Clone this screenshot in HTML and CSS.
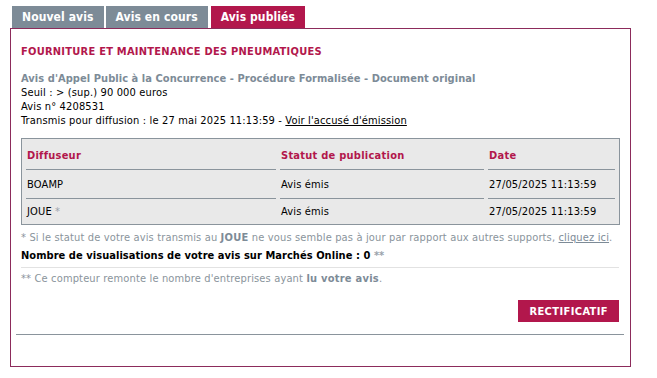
FILE: index.html
```html
<!DOCTYPE html>
<html lang="fr">
  <head>
    <meta charset="UTF-8" />
    <title>Avis publiés</title>
    <link rel="stylesheet" href="styles.css">
  </head>
  <body>
    <div class="tabs">
      <a class="tab">Nouvel avis</a>
      <a class="tab">Avis en cours</a>
      <a class="tab active">Avis publiés</a>
    </div>
    <div class="panel">
      <h1 class="title">FOURNITURE ET MAINTENANCE DES PNEUMATIQUES</h1>
      <div class="info">
        <div class="type">Avis d'Appel Public à la Concurrence - Procédure Formalisée - Document original</div>
        <div>Seuil : &gt; (sup.) 90 000 euros</div>
        <div>Avis n° 4208531</div>
        <div>Transmis pour diffusion : le 27 mai 2025 11:13:59 - <a href="#">Voir l'accusé d'émission</a></div>
      </div>
      <table class="diffusion">
        <thead>
          <tr>
            <th class="col1">Diffuseur</th>
            <th class="col2">Statut de publication</th>
            <th>Date</th>
          </tr>
        </thead>
        <tbody>
          <tr>
            <td>BOAMP</td>
            <td>Avis émis</td>
            <td>27/05/2025 11:13:59</td>
          </tr>
          <tr class="last">
            <td>JOUE <span class="star">*</span></td>
            <td>Avis émis</td>
            <td>27/05/2025 11:13:59</td>
          </tr>
        </tbody>
      </table>
      <p class="note">* Si le statut de votre avis transmis au <b>JOUE</b> ne vous semble pas à jour par rapport aux autres supports, <a href="#">cliquez ici</a>.</p>
      <p class="views">Nombre de visualisations de votre avis sur Marchés Online : 0 <span class="star">**</span></p>
      <p class="note count">** Ce compteur remonte le nombre d'entreprises ayant <b>lu votre avis</b>.</p>
      <div class="actions">
        <button class="btn">RECTIFICATIF</button>
      </div>
      <hr class="sep" />
    </div>
  </body>
</html>
```

FILE: styles.css
```css
body {
  margin: 6px 10px;
  font-family: "DejaVu Sans", Verdana, sans-serif;
  font-size: 11px;
  font-stretch: condensed;
  letter-spacing: 0.15px;
  color: #000;
  background: #fff;
}
b,
th,
.title {
  letter-spacing: 0.25px;
}
.tabs {
  display: flex;
  gap: 2px;
  padding-left: 2px;
}
.tab {
  display: block;
  height: 22px;
  line-height: 22px;
  padding: 0 10px;
  background-color: #7d8b97;
  color: #fff;
  font-weight: bold;
  font-size: 12px;
  letter-spacing: 0.1px;
}
.tab.active {
  background-color: #b2174c;
  margin-left: 1px;
}
.panel {
  border: 1px solid #8c2b5b;
  width: 621px;
  height: 339px;
  box-sizing: border-box;
  padding: 0 11px 0 10px;
  display: flex;
  flex-direction: column;
}
.title {
  margin: 16px 0 0;
  font-size: 11px;
  color: #b2174c;
  line-height: 14px;
}
.info {
  margin-top: 13px;
  line-height: 14px;
}
.type {
  color: #7d8b97;
  font-weight: bold;
  letter-spacing: 0.06px;
}
a {
  color: #000;
}
.diffusion {
  margin-top: 10px;
  width: 599px;
  background-color: #e9e9e9;
  border: 1px solid #8a949c;
  border-collapse: separate;
  border-spacing: 4px 0;
}
.diffusion th,
.diffusion td {
  text-align: left;
  padding: 0 1px;
  height: 28px;
  border-bottom: 1px solid #8a949c;
}
.diffusion th {
  color: #b2174c;
  height: 28px;
  padding-top: 2px;
}
.diffusion .last td {
  border-bottom: none;
  height: 25px;
}
.col1 {
  width: 248px;
}
.col2 {
  width: 202px;
}
.star {
  color: #9aa3ab;
}
.note {
  margin: 6px 0 0;
  color: #8a949c;
  line-height: 14px;
}
.note b {
  color: #7d8b97;
}
.note a {
  color: #7d8b97;
}
.views {
  margin: 4px 0 0;
  font-weight: bold;
  letter-spacing: 0.05px;
  line-height: 14px;
  padding-bottom: 4px;
  border-bottom: 1px solid #e2e2e2;
}
.count {
  margin-top: 4px;
}
.actions {
  display: flex;
  justify-content: flex-end;
  margin-top: 14px;
}
.btn {
  background-color: #b2174c;
  color: #fff;
  border: none;
  font-family: inherit;
  font-stretch: condensed;
  font-weight: bold;
  font-size: 11px;
  letter-spacing: 0.4px;
  padding: 0 11px;
  height: 22px;
}
.sep {
  margin: 12px -5px 0;
  border: none;
  border-top: 1px solid #8a949c;
}
```
